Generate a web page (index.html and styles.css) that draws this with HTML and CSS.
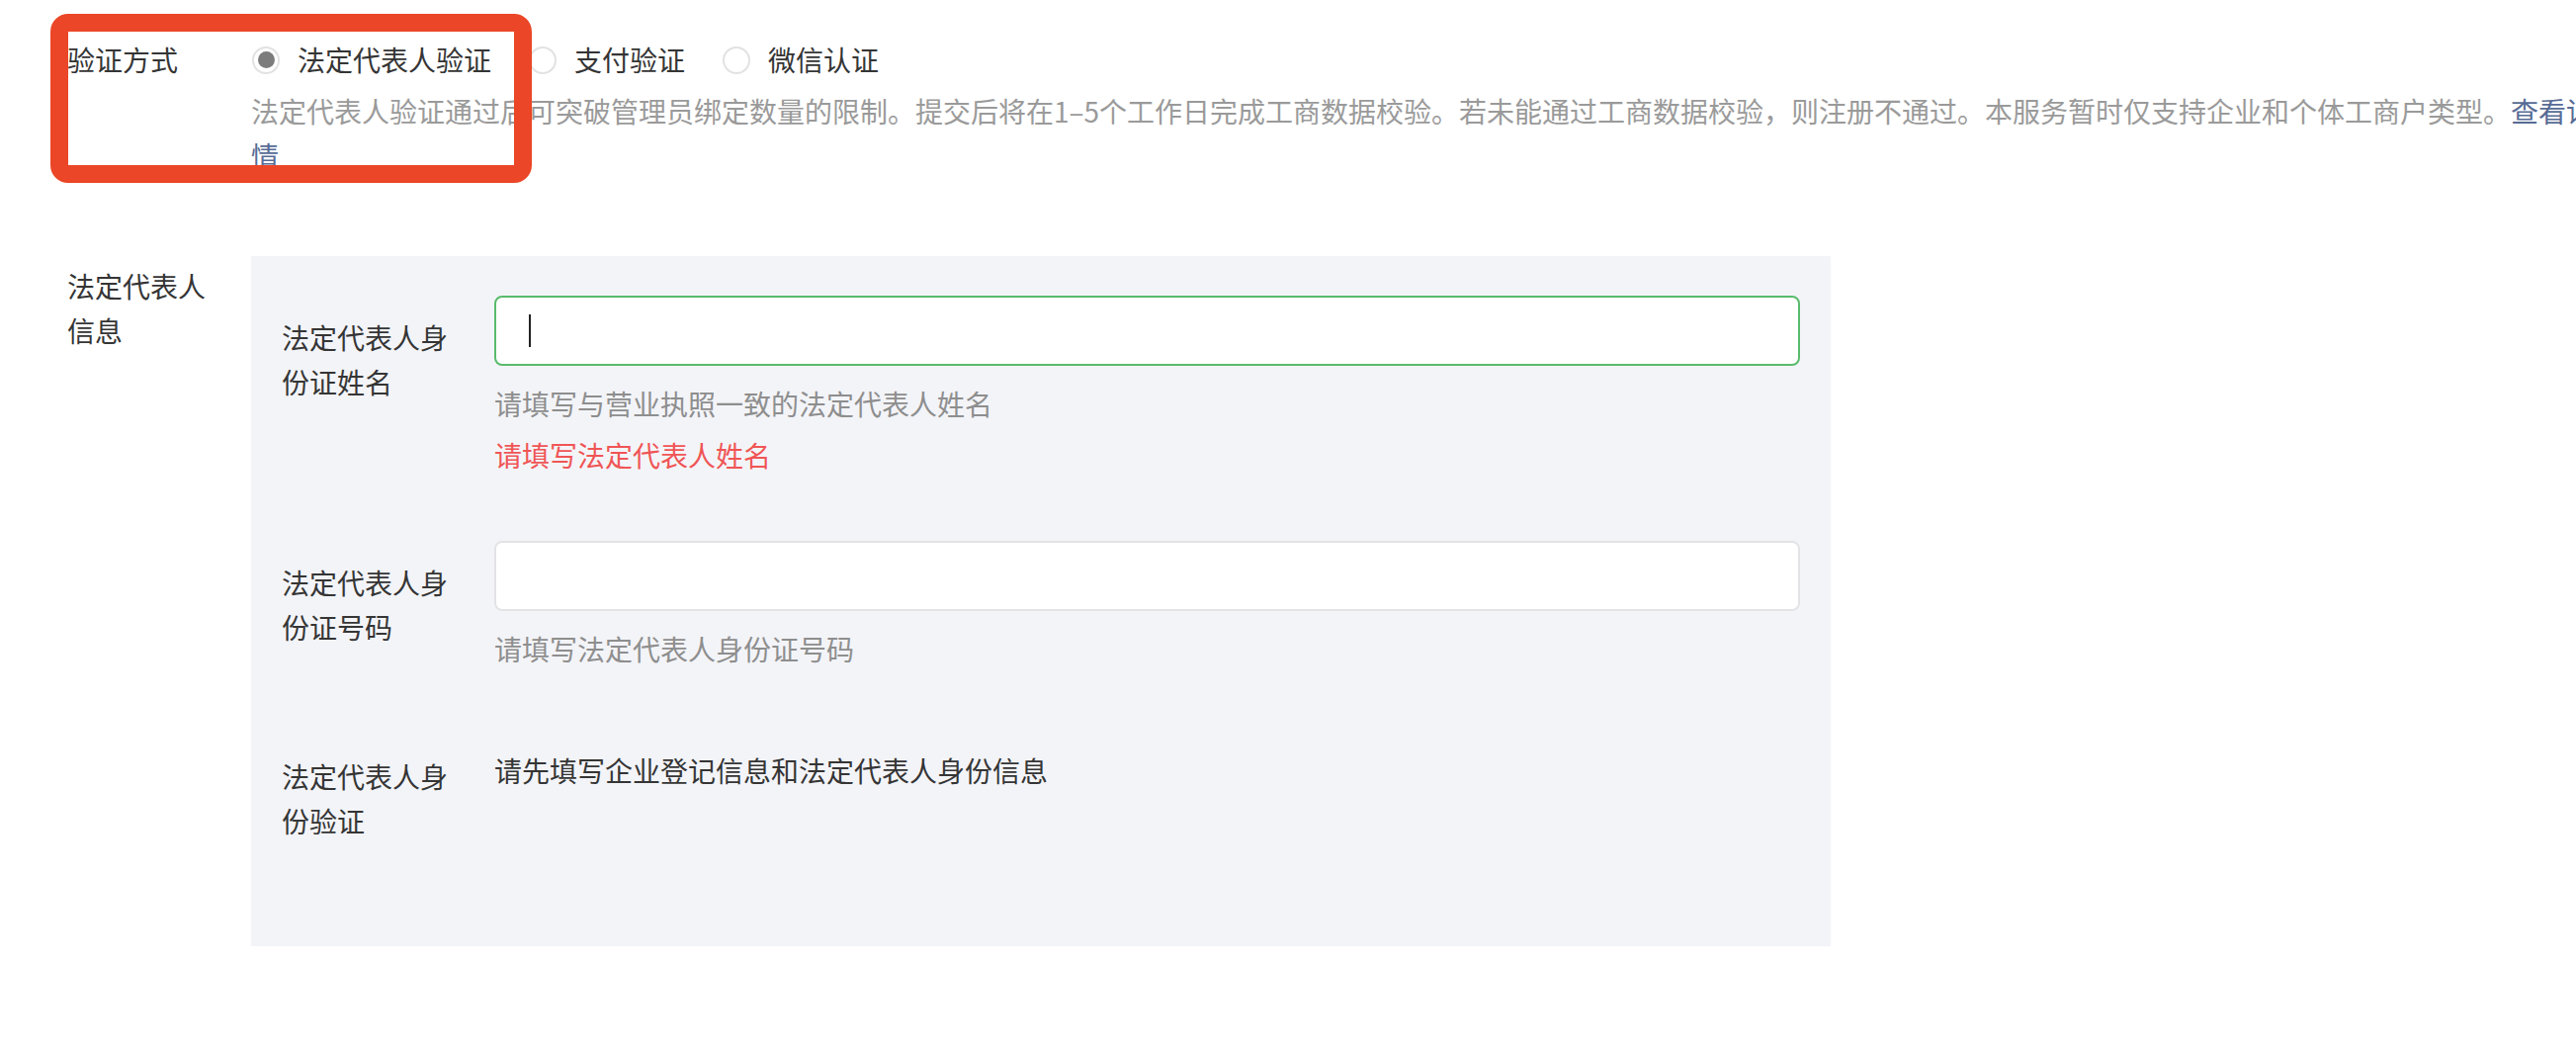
FILE: index.html
```html
<!DOCTYPE html>
<html lang="zh-CN">
<head>
<meta charset="utf-8">
<title>验证方式</title>
<link rel="stylesheet" href="styles.css">
</head>
<body>
<div class="page">
  <div class="annot"></div>

  <div class="field">
    <div class="field-label">验证方式</div>
    <div class="field-body">
      <div class="radios">
        <label class="radio"><span class="radio-icon is-checked"></span><span class="radio-text">法定代表人验证</span></label>
        <label class="radio"><span class="radio-icon"></span><span class="radio-text">支付验证</span></label>
        <label class="radio"><span class="radio-icon"></span><span class="radio-text">微信认证</span></label>
      </div>
      <p class="desc">法定代表人验证通过后可突破管理员绑定数量的限制。提交后将在1–5个工作日完成工商数据校验。若未能通过工商数据校验，则注册不通过。本服务暂时仅支持企业和个体工商户类型。<a class="link">查看详情</a></p>
    </div>
  </div>

  <div class="field field-info">
    <div class="field-label info-label">法定代表人信息</div>
    <div class="panel">
      <div class="row">
        <div class="row-label">法定代表人身份证姓名</div>
        <div class="row-body">
          <div class="input is-focus"><span class="caret"></span></div>
          <p class="hint">请填写与营业执照一致的法定代表人姓名</p>
          <p class="error">请填写法定代表人姓名</p>
        </div>
      </div>
      <div class="row">
        <div class="row-label">法定代表人身份证号码</div>
        <div class="row-body">
          <div class="input"></div>
          <p class="hint">请填写法定代表人身份证号码</p>
        </div>
      </div>
      <div class="row">
        <div class="row-label">法定代表人身份验证</div>
        <div class="row-body row-text">
          <p class="plain">请先填写企业登记信息和法定代表人身份信息</p>
        </div>
      </div>
    </div>
  </div>
</div>
</body>
</html>
```

FILE: styles.css
```css
html, body {
  margin: 0;
  padding: 0;
  background: #ffffff;
  overflow: hidden;
}

body {
  font-family: "Noto Sans CJK SC", "Noto Sans", "Liberation Sans", sans-serif;
  font-size: 28px;
  line-height: 45px;
  color: #353535;
}

p {
  margin: 0;
}

.page {
  position: relative;
  padding: 38px 0 0 68px;
  height: 1064px;
  box-sizing: border-box;
}

.annot {
  position: absolute;
  left: 51px;
  top: 14px;
  width: 487px;
  height: 171px;
  box-sizing: border-box;
  border: 18px solid #eb4627;
  border-radius: 18px;
  z-index: 2;
  pointer-events: none;
}

.field {
  display: flex;
  align-items: flex-start;
}

.field-label {
  flex: none;
  width: 150px;
  margin-right: 36px;
  color: #353535;
}

.field-body {
  flex: none;
}

.radios {
  display: flex;
  align-items: center;
  height: 45px;
}

.radio {
  display: flex;
  align-items: center;
  margin-right: 37px;
}

.radio-icon {
  flex: none;
  width: 28px;
  height: 28px;
  box-sizing: border-box;
  border: 2px solid #e2e2e4;
  border-radius: 50%;
  margin-left: 1px;
  margin-right: 18px;
  display: flex;
  align-items: center;
  justify-content: center;
  background: #fff;
}

.radio-icon.is-checked::after {
  content: "";
  width: 17px;
  height: 17px;
  border-radius: 50%;
  background: #7c7c7c;
}

.radio-text {
  color: #353535;
}

.desc {
  width: 2383px;
  margin-top: 7px;
  color: #9a9a9a;
}

.link {
  color: #576b95;
  text-decoration: none;
}

.field-info {
  margin-top: 79px;
}

.info-label {
  padding-top: 8px;
}

.panel {
  flex: none;
  width: 1598px;
  box-sizing: border-box;
  padding: 40px 31px;
  background: #f3f4f8;
}

.row {
  display: flex;
  align-items: flex-start;
  margin-bottom: 64px;
}

.row-label {
  flex: none;
  width: 180px;
  margin-right: 35px;
  padding-top: 20px;
  color: #353535;
}

.row-body {
  flex: 1;
  min-width: 0;
}

.input {
  height: 71px;
  box-sizing: border-box;
  border: 2px solid #e3e3e6;
  border-radius: 8px;
  background: #ffffff;
  display: flex;
  align-items: center;
  padding-left: 33px;
}

.input.is-focus {
  border-color: #59bb6b;
}

.caret {
  width: 2px;
  height: 33px;
  background: #222;
}

.hint {
  margin-top: 16px;
  color: #8e8e8e;
}

.error {
  margin-top: 7px;
  color: #f05555;
}

.row-text {
  padding-top: 14px;
}

.plain {
  color: #353535;
}
```
